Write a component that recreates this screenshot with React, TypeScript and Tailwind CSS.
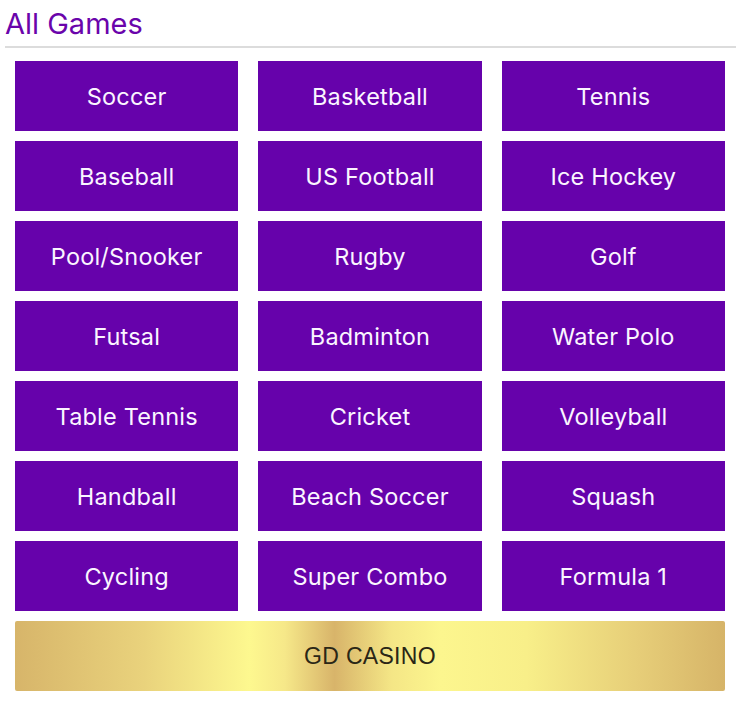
const games = [
  'Soccer', 'Basketball', 'Tennis',
  'Baseball', 'US Football', 'Ice Hockey',
  'Pool/Snooker', 'Rugby', 'Golf',
  'Futsal', 'Badminton', 'Water Polo',
  'Table Tennis', 'Cricket', 'Volleyball',
  'Handball', 'Beach Soccer', 'Squash',
  'Cycling', 'Super Combo', 'Formula 1',
];

export default function App() {
  return (
    <div className="min-h-screen bg-white font-['Inter',sans-serif]">
      {/* Header */}
      <div className="mx-[5px] border-b-2 border-[#dcdcdc] pb-[4px]">
        <h1 className="pt-[6px] text-[29px] leading-[36px] text-[#6a04ab]">All Games</h1>
      </div>

      {/* Game grid */}
      <div className="pl-[15px] pr-[16px] pt-[13px]">
        <div className="grid grid-cols-3 gap-x-[20px] gap-y-[10px]">
          {games.map((g) => (
            <button
              key={g}
              className="flex h-[70px] items-center justify-center bg-[#6602ab] pt-[2px] text-[23.5px] tracking-[0.2px] text-[#fbf5ff]"
            >
              {g}
            </button>
          ))}
        </div>

        <button className="mt-[10px] flex h-[70px] w-full items-center justify-center rounded-[2px] bg-[linear-gradient(to_right,#d7b56a_0%,#e9d27c_18%,#fdf88f_33%,#f6e889_38%,#d8b46a_45%,#f4e686_53%,#fcf68e_60%,#f8ef89_72%,#e6cd78_88%,#d6b468_100%)] font-['Liberation_Sans',sans-serif] text-[23px] tracking-[0.3px] text-[#2a2616]">
          GD CASINO
        </button>
      </div>
    </div>
  );
}
